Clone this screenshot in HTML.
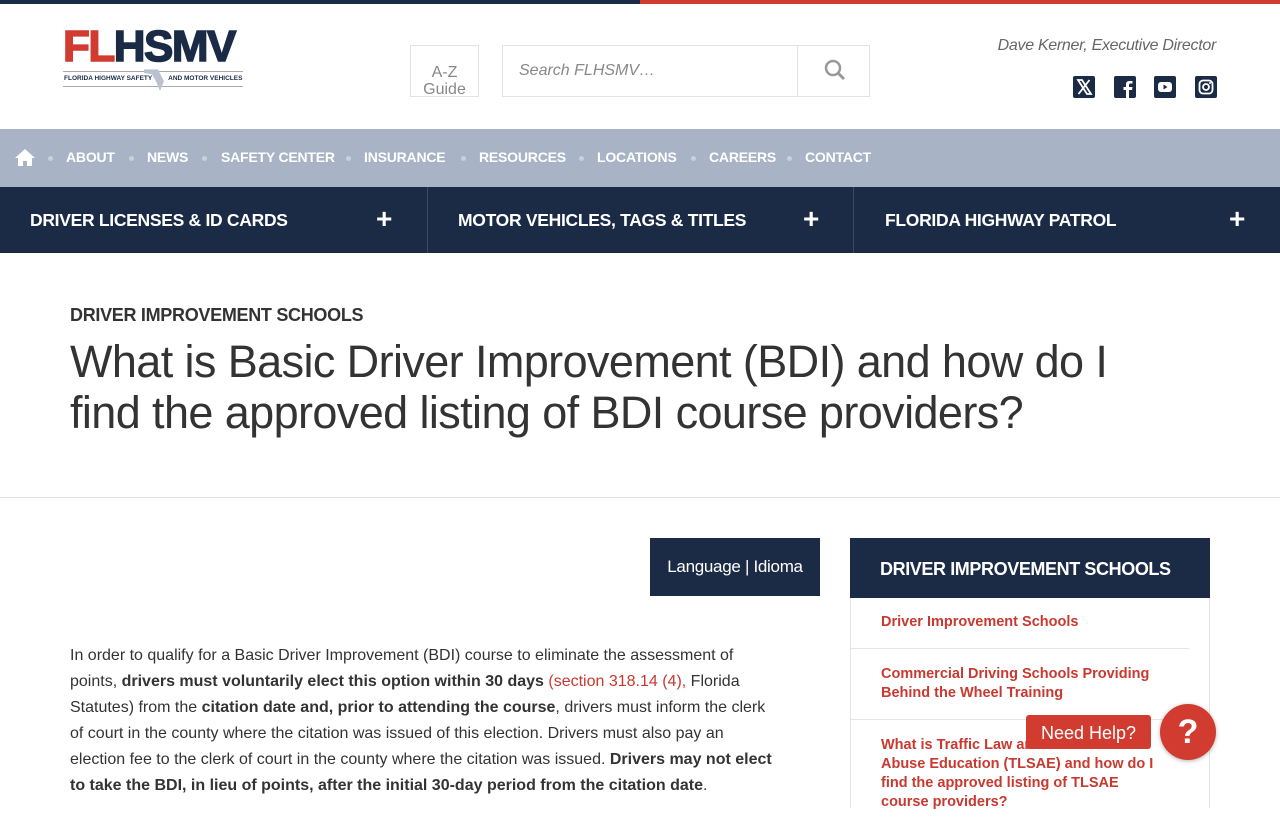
<!DOCTYPE html>
<html><head><meta charset="utf-8">
<style>
*{margin:0;padding:0;box-sizing:border-box}
body{width:1280px;height:800px;overflow:hidden;font-family:"Liberation Sans",sans-serif;background:#fff;color:#333;position:relative}
.tb{position:absolute;top:0;height:4px;width:640px}
.abs{position:absolute}
.nav1{position:absolute;top:129px;left:0;width:1280px;height:58px;background:#a8b4c5}
.nav1 span{position:absolute;top:20px;font-size:14px;font-weight:bold;color:#fff;letter-spacing:-0.2px}
.dot{position:absolute;top:27px;width:5px;height:5px;border-radius:50%;background:#c8d0db}
.nav2{position:absolute;top:187px;left:0;width:1280px;height:66px;background:#1b2b45}
.nav2 .it{position:absolute;top:23px;font-size:17.5px;font-weight:bold;color:#fff;letter-spacing:-0.3px}
.nav2 .pl{position:absolute;top:16px;font-size:28px;color:#fff;font-weight:bold}
.nav2 .sep{position:absolute;top:0;width:1px;height:66px;background:#3b4b65}
p.body{position:absolute;left:70px;top:643px;width:712px;font-size:16px;line-height:26px;color:#333;letter-spacing:0}
a.r{color:#c8392f;text-decoration:none}
.side a{display:block;color:#c8392f;font-weight:bold;font-size:14.5px;line-height:19px}
</style></head><body>
<div class="tb" style="left:0;background:#1b2b45"></div>
<div class="tb" style="left:640px;background:#d13b30"></div>

<!-- logo -->
<div class="abs" style="left:63px;top:28px;font-size:44px;font-weight:bold;line-height:38px;letter-spacing:-1.5px;transform:scaleX(1.0);transform-origin:left top;-webkit-text-stroke:1.5px">
<span style="color:#d13b30;-webkit-text-stroke-color:#d13b30">FL</span><span style="color:#1b2b45;-webkit-text-stroke-color:#1b2b45">HSMV</span></div>
<div class="abs" style="left:63px;top:71px;width:180px;height:1px;background:#aaa"></div>
<div class="abs" style="left:64px;top:75px;font-size:6.5px;font-weight:bold;color:#1b2b45;white-space:nowrap">FLORIDA HIGHWAY SAFETY &nbsp;&nbsp;&nbsp;&nbsp;&nbsp;&nbsp;&nbsp; AND MOTOR VEHICLES</div>
<div class="abs" style="left:63px;top:86px;width:180px;height:1px;background:#aaa"></div>
<div class="abs" style="left:144px;top:67px;width:20px;height:24px;background:#b9c3d0;clip-path:polygon(0 10%,70% 10%,100% 60%,80% 100%,60% 60%,40% 30%,0 25%)"></div>

<div class="abs" style="left:410px;top:45px;width:69px;height:52px;border:1px solid #e3e3e3;text-align:center;color:#888;font-size:16px;line-height:17px;padding-top:18px">A-Z<br>Guide</div>
<div class="abs" style="left:502px;top:45px;width:368px;height:52px;border:1px solid #e3e3e3"></div>
<div class="abs" style="left:797px;top:45px;width:1px;height:52px;background:#e3e3e3"></div>
<div class="abs" style="left:519px;top:62px;font-size:16px;color:#888;font-style:italic">Search FLHSMV…</div>
<svg class="abs" style="left:823px;top:58px" width="24" height="24" viewBox="0 0 24 24"><circle cx="10" cy="10" r="7" fill="none" stroke="#999" stroke-width="2.5"/><path d="M15 15l6 6" stroke="#999" stroke-width="3"/></svg>

<div class="abs" style="left:968px;top:37px;width:248px;text-align:right;font-size:16px;font-style:italic;color:#666;letter-spacing:-0.3px">Dave Kerner, Executive Director</div>
<svg class="abs" style="left:1073px;top:76px" width="22" height="22" viewBox="0 0 22 22"><rect width="22" height="22" rx="2" fill="#1b2b45"/><path d="M5 4h4l9 14h-4z M16.5 4L5.5 18" stroke="#fff" stroke-width="1.8" fill="none"/></svg>
<svg class="abs" style="left:1114px;top:76px" width="22" height="22" viewBox="0 0 22 22"><rect width="22" height="22" rx="2" fill="#1b2b45"/><path d="M15 22v-8h3l.5-3H15V9c0-1 .5-1.5 1.5-1.5H18.5V5h-3C13 5 12 6.5 12 8.5V11H9.5v3H12v8z" fill="#fff"/></svg>
<svg class="abs" style="left:1154px;top:76px" width="22" height="22" viewBox="0 0 22 22"><rect width="22" height="22" rx="2" fill="#1b2b45"/><rect x="4" y="6" width="14" height="10" rx="3" fill="#fff"/><path d="M9.5 8.5v5l4-2.5z" fill="#1b2b45"/></svg>
<svg class="abs" style="left:1195px;top:76px" width="22" height="22" viewBox="0 0 22 22"><rect width="22" height="22" rx="2" fill="#1b2b45"/><rect x="4.5" y="4.5" width="13" height="13" rx="3.5" fill="none" stroke="#fff" stroke-width="1.8"/><circle cx="11" cy="11" r="3" fill="none" stroke="#fff" stroke-width="1.8"/><circle cx="15" cy="7" r="1" fill="#fff"/></svg>

<div class="nav1">
<svg class="abs" style="left:15px;top:19px" width="20" height="18" viewBox="0 0 20 18"><path d="M10 1L0 10h3v8h5v-5h4v5h5v-8h3z" fill="#fff"/></svg>
<div class="dot" style="left:48px"></div><span style="left:66px">ABOUT</span>
<div class="dot" style="left:129px"></div><span style="left:147px">NEWS</span>
<div class="dot" style="left:202px"></div><span style="left:221px">SAFETY CENTER</span>
<div class="dot" style="left:346px"></div><span style="left:364px">INSURANCE</span>
<div class="dot" style="left:461px"></div><span style="left:479px">RESOURCES</span>
<div class="dot" style="left:579px"></div><span style="left:597px">LOCATIONS</span>
<div class="dot" style="left:691px"></div><span style="left:709px">CAREERS</span>
<div class="dot" style="left:787px"></div><span style="left:805px">CONTACT</span>
</div>
<div class="nav2">
<span class="it" style="left:30px">DRIVER LICENSES &amp; ID CARDS</span><span class="pl" style="left:376px">+</span>
<div class="sep" style="left:427px"></div>
<span class="it" style="left:458px">MOTOR VEHICLES, TAGS &amp; TITLES</span><span class="pl" style="left:803px">+</span>
<div class="sep" style="left:853px"></div>
<span class="it" style="left:885px">FLORIDA HIGHWAY PATROL</span><span class="pl" style="left:1229px">+</span>
</div>

<div class="abs" style="left:70px;top:305px;font-size:18px;font-weight:bold;color:#333;letter-spacing:-0.3px">DRIVER IMPROVEMENT SCHOOLS</div>
<div class="abs" style="left:70px;top:336px;width:1070px;font-size:45px;font-weight:300;line-height:51px;color:#333;letter-spacing:-0.6px">What is Basic Driver Improvement (BDI) and how do I find the approved listing of BDI course providers?</div>
<div class="abs" style="left:0;top:497px;width:1280px;height:1px;background:#e5e5e5"></div>

<div class="abs" style="left:650px;top:538px;width:170px;height:58px;background:#1b2b45;color:#fff;font-size:17px;text-align:center;line-height:58px;letter-spacing:-0.3px">Language | Idioma</div>

<p class="body">In order to qualify for a Basic Driver Improvement (BDI) course to eliminate the assessment of points, <b>drivers must voluntarily elect this option within 30 days</b> <a class="r">(section 318.14 (4),</a> Florida Statutes) from the <b>citation date and, prior to attending the course</b>, drivers must inform the clerk of court in the county where the citation was issued of this election. Drivers must also pay an election fee to the clerk of court in the county where the citation was issued. <b>Drivers may not elect to take the BDI, in lieu of points, after the initial 30-day period from the citation date</b>.</p>

<div class="abs" style="left:850px;top:538px;width:360px;height:60px;background:#1b2b45;color:#fff;font-size:18px;font-weight:bold;padding:21px 0 0 30px;letter-spacing:-0.4px">DRIVER IMPROVEMENT SCHOOLS</div>
<div class="abs side" style="left:850px;top:598px;width:360px;height:210px;border-left:1px solid #e5e5e5;border-right:1px solid #e5e5e5">
<div style="padding:15px 30px 16px;margin-right:20px;border-bottom:1px solid #e5e5e5"><a>Driver Improvement Schools</a></div>
<div style="padding:16px 30px 16px;margin-right:20px;border-bottom:1px solid #e5e5e5"><a>Commercial Driving Schools Providing Behind the Wheel Training</a></div>
<div style="padding:16px 30px;margin-right:20px"><a>What is Traffic Law and Substance Abuse Education (TLSAE) and how do I find the approved listing of TLSAE course providers?</a></div>
</div>
<div class="abs" style="left:1026px;top:715px;width:125px;height:34px;background:#d13b30;border-radius:3px;color:#fff;font-size:18px;text-align:center;line-height:36px">Need Help?</div>
<div class="abs" style="left:1160px;top:704px;width:56px;height:56px;border-radius:50%;background:#d13b30;color:#fff;font-size:34px;font-weight:bold;text-align:center;line-height:56px;box-shadow:0 1px 4px rgba(0,0,0,.3)">?</div>
</body></html>
